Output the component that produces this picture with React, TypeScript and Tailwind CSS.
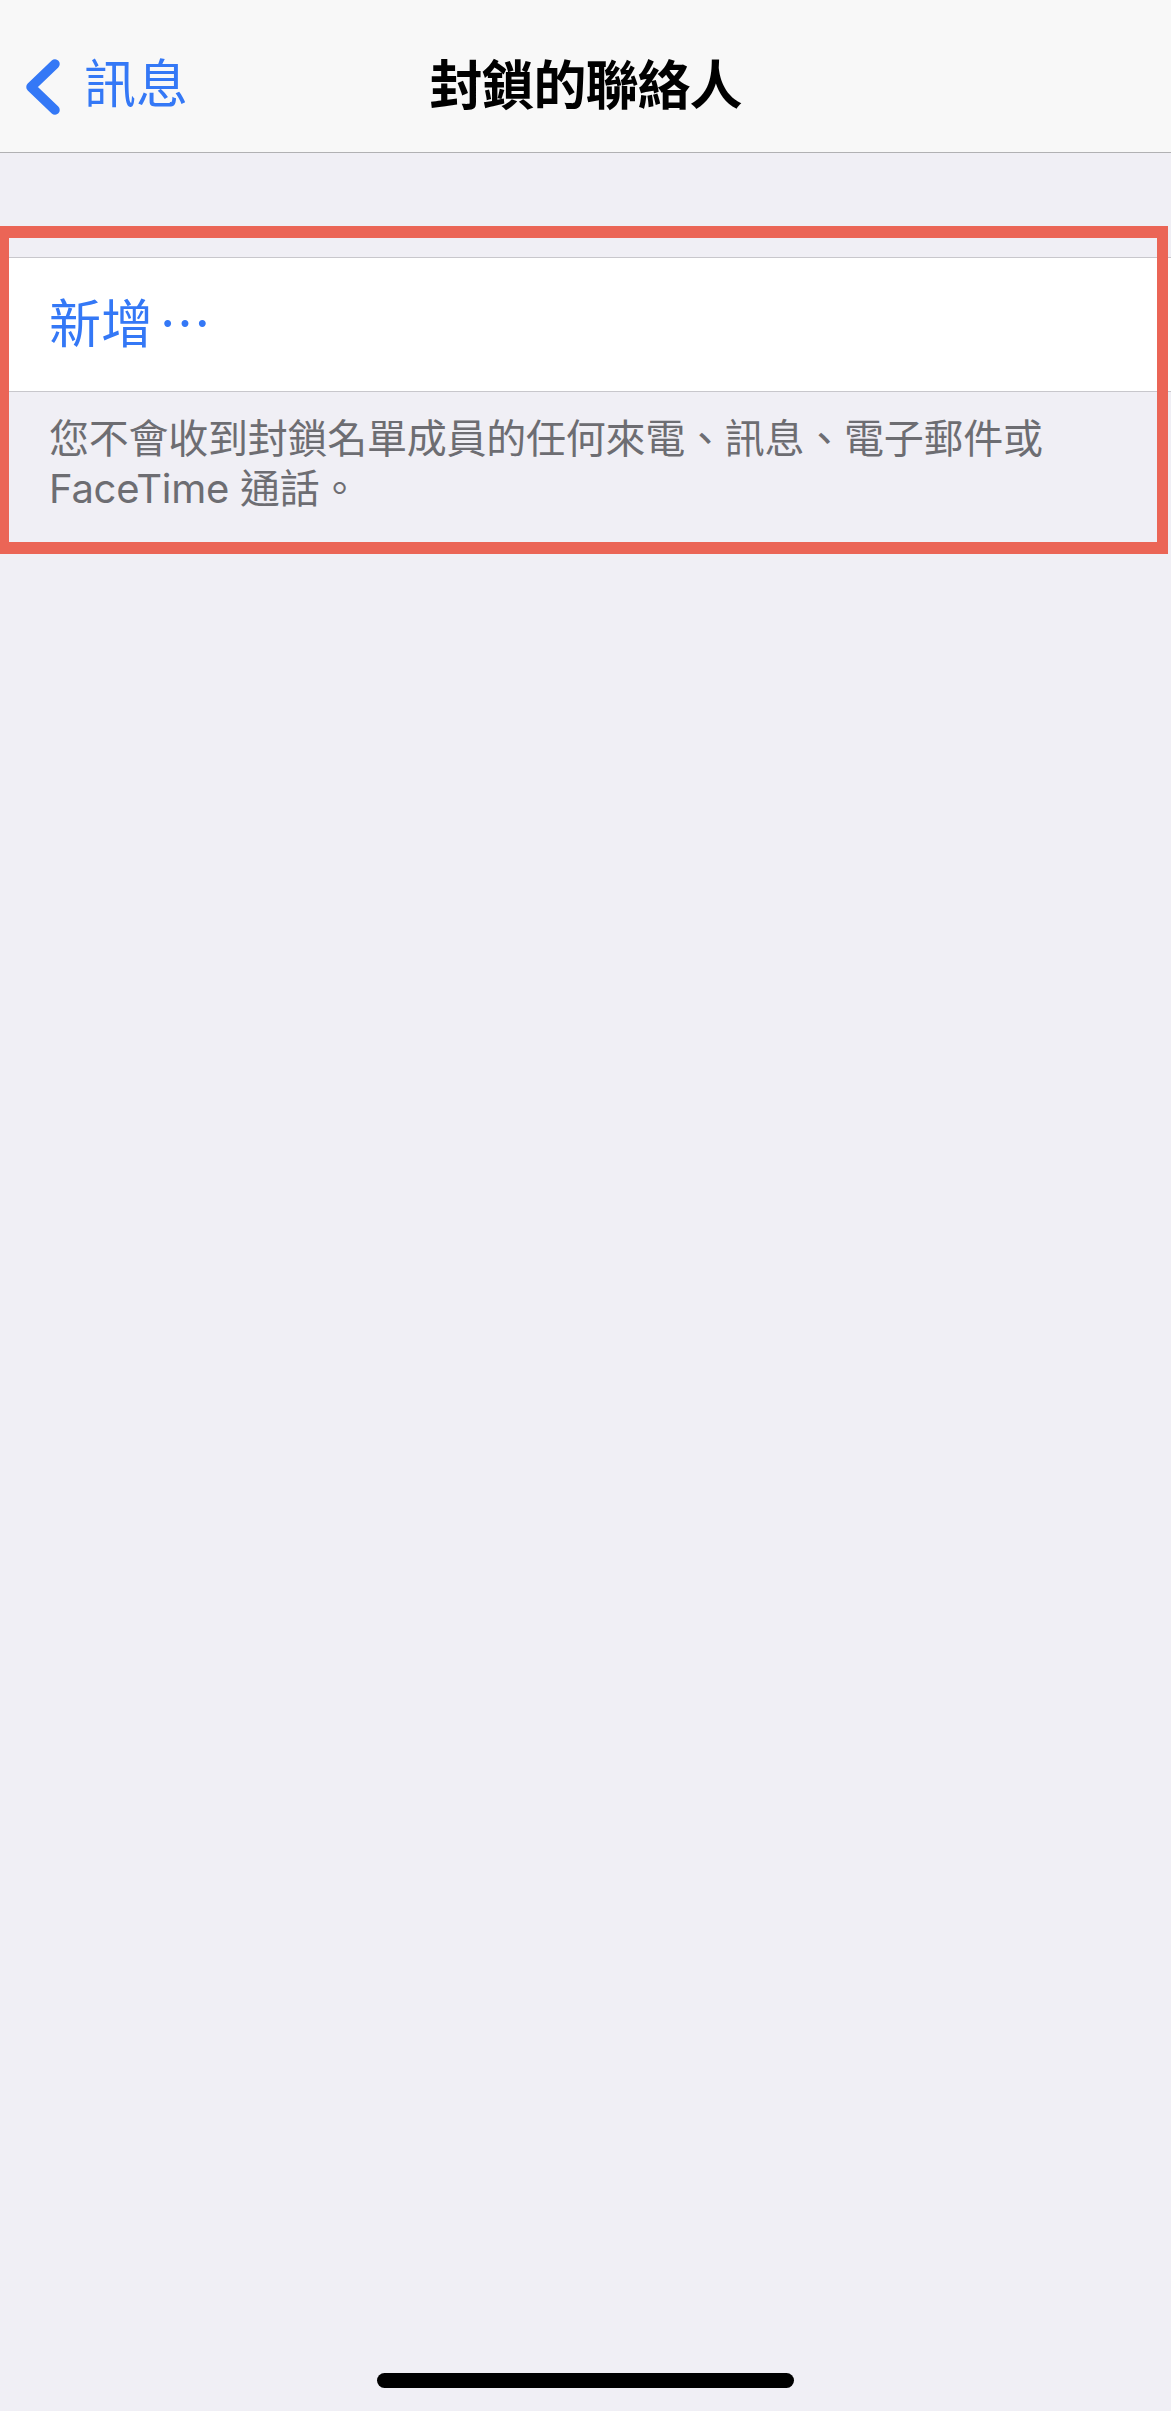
import React from "react";

const font = {
  fontFamily: 'Inter, "Noto Sans CJK TC", "Noto Sans", sans-serif',
};

function BackChevron() {
  return (
    <svg width="45" height="70" viewBox="0 0 45 70" className="shrink-0">
      <path
        d="M35 13 L11 36 L35 59"
        fill="none"
        stroke="#3478f6"
        strokeWidth="9.5"
        strokeLinecap="round"
        strokeLinejoin="round"
      />
    </svg>
  );
}

function NavBar() {
  return (
    <div className="bg-[#f8f8f8] border-b border-[#b1b1b3] pt-[40px] pb-[20px]">
      <div className="grid grid-cols-[1fr_auto_1fr] items-center h-[92px]">
        <div className="flex items-center pl-[20px] gap-[19px]">
          <BackChevron />
          <span className="text-[52px] leading-none text-[#3478f6] -mt-[2px]">訊息</span>
        </div>
        <div className="text-[53px] leading-none font-semibold text-black tracking-[-1px]">
          封鎖的聯絡人
        </div>
        <div />
      </div>
    </div>
  );
}

function App() {
  return (
    <div
      className="relative w-[1171px] h-[2411px] bg-[#f0eff5] flex flex-col overflow-hidden"
      style={font}
    >
      <NavBar />

      <div className="flex-1 flex flex-col">
        <div className="h-[104px]" />
        <div className="border-y border-[#c8c7cc] bg-white h-[135px] flex items-center pl-[49px]">
          <span className="text-[52px] leading-none text-[#3478f6]">新增</span>
          <span className="text-[52px] leading-none text-[#3478f6] ml-[6px]">⋯</span>
        </div>
        <div className="pl-[49px] pr-[60px] pt-[22px] text-[40px] leading-[50px] tracking-[-0.25px] text-[#6d6d72]">
          您不會收到封鎖名單成員的任何來電、訊息、電子郵件或 FaceTime 通話。
        </div>
      </div>

      <div className="flex justify-center pb-[23px]">
        <div className="w-[417px] h-[15px] rounded-full bg-black" />
      </div>

      {/* annotation box */}
      <div className="absolute left-0 top-[226px] w-[1168px] h-[328px] border-t-[12px] border-b-[12px] border-l-[9px] border-r-[11px] border-[#eb6556]" />
    </div>
  );
}

export default App;
